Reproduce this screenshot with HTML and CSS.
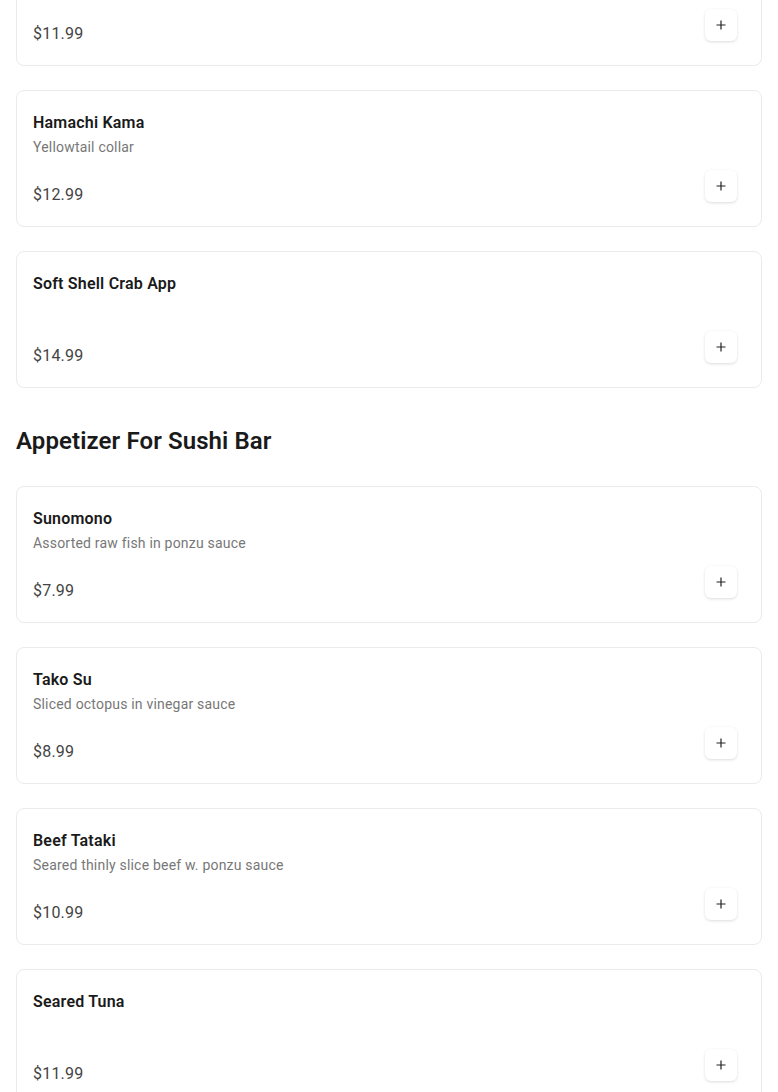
FILE: index.html
```html
<!DOCTYPE html>
<html lang="en">
<head>
    <meta charset="UTF-8">
    <title>Menu</title>
    <link rel="stylesheet" href="styles.css">
</head>
<body>
<div class="menu">
    <section class="category category-first">
        <div class="items">
            <div class="item">
                <div class="item-name">Agedashi Tofu</div>
                <div class="item-desc">Fried tofu in tempura sauce</div>
                <div class="item-row">
                    <span class="item-price">$11.99</span>
                    <button class="add-btn" aria-label="Add"><svg width="10" height="10" viewBox="0 0 10 10"><path d="M5 0.5v9M0.5 5h9" stroke="#222" stroke-width="1.2" fill="none"/></svg></button>
                </div>
            </div>
            <div class="item">
                <div class="item-name">Hamachi Kama</div>
                <div class="item-desc">Yellowtail collar</div>
                <div class="item-row">
                    <span class="item-price">$12.99</span>
                    <button class="add-btn" aria-label="Add"><svg width="10" height="10" viewBox="0 0 10 10"><path d="M5 0.5v9M0.5 5h9" stroke="#222" stroke-width="1.2" fill="none"/></svg></button>
                </div>
            </div>
            <div class="item">
                <div class="item-name">Soft Shell Crab App</div>
                <div class="item-desc"></div>
                <div class="item-row">
                    <span class="item-price">$14.99</span>
                    <button class="add-btn" aria-label="Add"><svg width="10" height="10" viewBox="0 0 10 10"><path d="M5 0.5v9M0.5 5h9" stroke="#222" stroke-width="1.2" fill="none"/></svg></button>
                </div>
            </div>
        </div>
    </section>

    <section class="category">
        <h2 class="category-title">Appetizer For Sushi Bar</h2>
        <div class="items">
            <div class="item">
                <div class="item-name">Sunomono</div>
                <div class="item-desc">Assorted raw fish in ponzu sauce</div>
                <div class="item-row">
                    <span class="item-price">$7.99</span>
                    <button class="add-btn" aria-label="Add"><svg width="10" height="10" viewBox="0 0 10 10"><path d="M5 0.5v9M0.5 5h9" stroke="#222" stroke-width="1.2" fill="none"/></svg></button>
                </div>
            </div>
            <div class="item">
                <div class="item-name">Tako Su</div>
                <div class="item-desc">Sliced octopus in vinegar sauce</div>
                <div class="item-row">
                    <span class="item-price">$8.99</span>
                    <button class="add-btn" aria-label="Add"><svg width="10" height="10" viewBox="0 0 10 10"><path d="M5 0.5v9M0.5 5h9" stroke="#222" stroke-width="1.2" fill="none"/></svg></button>
                </div>
            </div>
            <div class="item">
                <div class="item-name">Beef Tataki</div>
                <div class="item-desc">Seared thinly slice beef w. ponzu sauce</div>
                <div class="item-row">
                    <span class="item-price">$10.99</span>
                    <button class="add-btn" aria-label="Add"><svg width="10" height="10" viewBox="0 0 10 10"><path d="M5 0.5v9M0.5 5h9" stroke="#222" stroke-width="1.2" fill="none"/></svg></button>
                </div>
            </div>
            <div class="item">
                <div class="item-name">Seared Tuna</div>
                <div class="item-desc"></div>
                <div class="item-row">
                    <span class="item-price">$11.99</span>
                    <button class="add-btn" aria-label="Add"><svg width="10" height="10" viewBox="0 0 10 10"><path d="M5 0.5v9M0.5 5h9" stroke="#222" stroke-width="1.2" fill="none"/></svg></button>
                </div>
            </div>
        </div>
    </section>
</div>
</body>
</html>
```
FILE: styles.css
```css
body {
    margin: 0;
    background: #fff;
    font-family: Roboto, "Liberation Sans", sans-serif;
    color: #1a1a1a;
}

.menu {
    padding: 0 16px;
    margin-top: -71px;
}

.category {
    margin-top: 37px;
}

.category-first {
    margin-top: 0;
}

.category-title {
    margin: 0 0 29px;
    font-size: 24px;
    line-height: 32px;
    font-weight: 600;
    letter-spacing: 0.1px;
    color: #1a1a1a;
}

.items {
    display: flex;
    flex-direction: column;
    gap: 24px;
}

.item {
    border: 1px solid #ebebeb;
    border-radius: 8px;
    padding: 20px 24px 19px 16px;
    background: #fff;
}

.item-name {
    font-size: 16px;
    line-height: 24px;
    font-weight: 600;
    letter-spacing: 0.2px;
    color: #1a1a1a;
}

.item-desc {
    margin-top: 2px;
    min-height: 20px;
    font-size: 14px;
    line-height: 20px;
    letter-spacing: 0.2px;
    color: #777;
}

.item-row {
    display: flex;
    justify-content: space-between;
    align-items: flex-start;
    margin-top: 13px;
}

.item-price {
    margin-top: 13px;
    font-size: 16px;
    line-height: 24px;
    letter-spacing: 0.2px;
    color: #444;
}

.add-btn {
    width: 32px;
    height: 32px;
    padding: 0;
    border: none;
    border-radius: 6px;
    background: #fff;
    box-shadow: 0 1px 3px rgba(0, 0, 0, 0.14);
    display: flex;
    align-items: center;
    justify-content: center;
    cursor: pointer;
}
```
